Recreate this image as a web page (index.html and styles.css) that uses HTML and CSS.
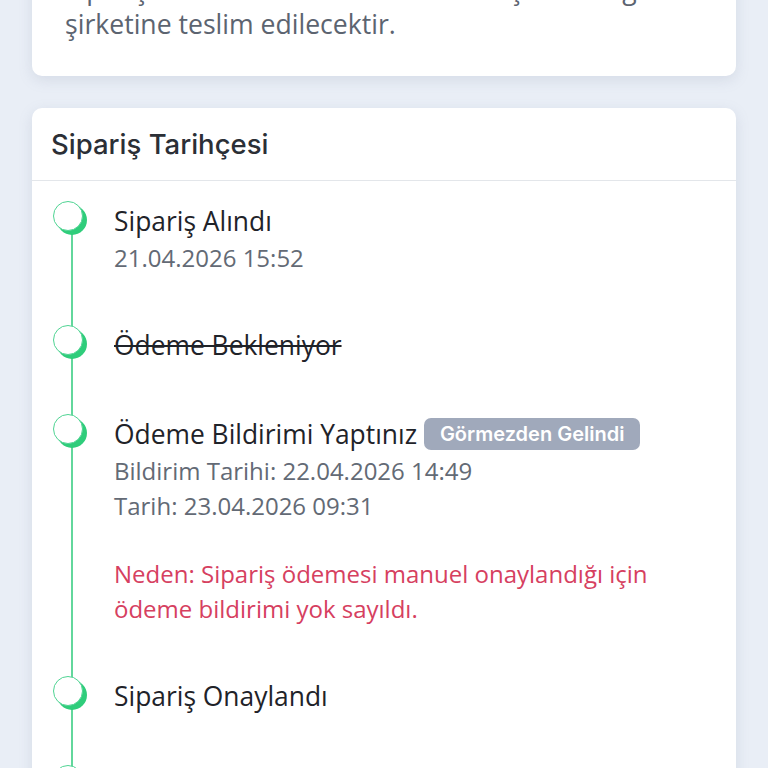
FILE: index.html
```html
<!DOCTYPE html>
<html lang="tr">
<head>
<meta charset="utf-8">
<title>Sipariş Tarihçesi</title>
<link rel="stylesheet" href="styles.css">
</head>
<body>
<div class="page">
  <section class="card info-card">
    <p class="info-text">Siparişiniz hazırlandıktan sonra anlaşmalı kargo<br>şirketine teslim edilecektir.</p>
  </section>

  <section class="card history-card">
    <header class="card-header">Sipariş Tarihçesi</header>
    <ol class="timeline">
      <li class="tl-item">
        <span class="tl-dot"></span>
        <div class="tl-title">Sipariş Alındı</div>
        <div class="tl-meta">21.04.2026 15:52</div>
      </li>
      <li class="tl-item">
        <span class="tl-dot"></span>
        <div class="tl-title tl-struck">Ödeme Bekleniyor</div>
      </li>
      <li class="tl-item">
        <span class="tl-dot"></span>
        <div class="tl-title">Ödeme Bildirimi Yaptınız <span class="badge">Görmezden Gelindi</span></div>
        <div class="tl-meta">Bildirim Tarihi: 22.04.2026 14:49</div>
        <div class="tl-meta">Tarih: 23.04.2026 09:31</div>
        <div class="tl-reason">Neden: Sipariş ödemesi manuel onaylandığı için ödeme bildirimi yok sayıldı.</div>
      </li>
      <li class="tl-item">
        <span class="tl-dot"></span>
        <div class="tl-title">Sipariş Onaylandı</div>
      </li>
      <li class="tl-item">
        <span class="tl-dot"></span>
        <div class="tl-title">Kargoya Verildi</div>
      </li>
    </ol>
  </section>
</div>
</body>
</html>
```

FILE: styles.css
```css
html, body {
  margin: 0;
  padding: 0;
  background: #e9eef6;
  height: 768px;
  overflow: hidden;
}

body {
  font-family: "Open Sans", "Noto Sans", "DejaVu Sans", sans-serif;
  color: #1f2329;
}

.page {
  margin-top: -50px;
  padding: 0 32px;
  display: flex;
  flex-direction: column;
  gap: 32px;
}

.card {
  background: #ffffff;
  border-radius: 10px;
  box-shadow: 0 4px 14px rgba(120, 135, 160, 0.18);
}

.info-card {
  padding: 22px 33px 34px;
}

.info-text {
  margin: 0;
  font-size: 26.6px;
  line-height: 35px;
  color: #5c6470;
  white-space: nowrap;
}

.history-card {
  overflow: hidden;
}

.card-header {
  height: 72px;
  line-height: 72px;
  padding: 0 19px;
  border-bottom: 1px solid #e3e6ea;
  font-family: "Inter", "Noto Sans", sans-serif;
  font-weight: 500;
  font-size: 27.5px;
  color: #2b2f36;
}

.timeline {
  list-style: none;
  margin: 0;
  padding: 21px 0 0;
  position: relative;
}

.timeline::before {
  content: "";
  position: absolute;
  left: 39px;
  top: 30px;
  bottom: 0;
  width: 2px;
  background: #62d79c;
}

.tl-item {
  position: relative;
  padding: 0 24px 51px 82px;
}

.tl-dot {
  position: absolute;
  left: 21px;
  top: -1px;
  width: 28px;
  height: 28px;
  border-radius: 50%;
  background: #ffffff;
  border: 1.5px solid #4fd493;
  box-shadow: 4px 4px 0 0 #2fcd7b;
}

.tl-title {
  font-size: 26.4px;
  line-height: 38px;
  color: #1f2329;
}

.tl-struck {
  text-decoration: line-through;
  text-decoration-thickness: 2px;
}

.tl-meta {
  font-size: 24px;
  line-height: 35px;
  color: #636a75;
}

.tl-reason {
  margin-top: 33px;
  font-size: 24px;
  line-height: 35px;
  color: #d6405f;
}

.badge {
  display: inline-block;
  vertical-align: 3px;
  margin-left: 0;
  padding: 0 16px;
  height: 32px;
  line-height: 32px;
  border-radius: 7px;
  background: #a0a9bb;
  color: #ffffff;
  font-family: "Inter", "Noto Sans", sans-serif;
  font-weight: 600;
  font-size: 20px;
}
```
